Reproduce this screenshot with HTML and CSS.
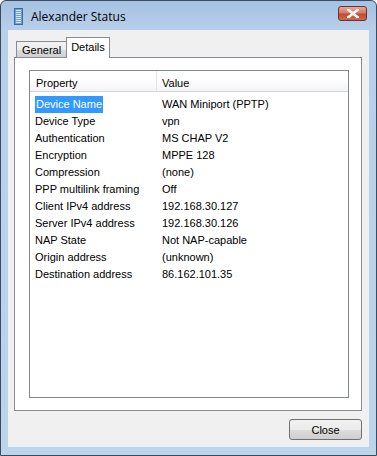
FILE: index.html
```html
<!DOCTYPE html>
<html lang="en">
<head>
  <meta charset="UTF-8">
  <title>Alexander Status</title>
  <link rel="stylesheet" href="styles.css">
</head>
<body>
  <div class="window">
    <div class="titlebar">
      <svg class="app-icon" width="9" height="17" viewBox="0 0 9 17">
        <rect x="0.5" y="0.5" width="8" height="16" fill="#6f9fd8" stroke="#3a6aa8"/>
        <rect x="2" y="2" width="5" height="1" fill="#dfeaf8"/>
        <rect x="2" y="4" width="5" height="1" fill="#dfeaf8"/>
        <rect x="2" y="6" width="5" height="1" fill="#dfeaf8"/>
        <rect x="2" y="8" width="5" height="1" fill="#dfeaf8"/>
        <rect x="2" y="10" width="5" height="1" fill="#dfeaf8"/>
        <rect x="2" y="12" width="5" height="1" fill="#dfeaf8"/>
        <rect x="2" y="14" width="5" height="1" fill="#dfeaf8"/>
      </svg>
      <span class="title">Alexander Status</span>
      <div class="close-x">
        <svg width="12" height="9" viewBox="0 0 12 9">
          <path d="M1 0.5 L11 8.5 M11 0.5 L1 8.5" stroke="#ffffff" stroke-width="2.6" stroke-linecap="square"/>
          <path d="M1 0.5 L11 8.5 M11 0.5 L1 8.5" stroke="#f4f4f4" stroke-width="1.6"/>
        </svg>
      </div>
    </div>
    <div class="client">
      <div class="tabs">
        <div class="tab">General</div>
        <div class="tab active">Details</div>
      </div>
      <div class="panel">
        <div class="listview">
          <div class="lv-header">
            <div class="col-prop">Property</div>
            <div class="col-val">Value</div>
          </div>
          <div class="lv-rows">
            <div class="row"><div class="cell-prop"><span class="selected">Device Name</span></div><div class="cell-val">WAN Miniport (PPTP)</div></div>
            <div class="row"><div class="cell-prop">Device Type</div><div class="cell-val">vpn</div></div>
            <div class="row"><div class="cell-prop">Authentication</div><div class="cell-val">MS CHAP V2</div></div>
            <div class="row"><div class="cell-prop">Encryption</div><div class="cell-val">MPPE 128</div></div>
            <div class="row"><div class="cell-prop">Compression</div><div class="cell-val">(none)</div></div>
            <div class="row"><div class="cell-prop">PPP multilink framing</div><div class="cell-val">Off</div></div>
            <div class="row"><div class="cell-prop">Client IPv4 address</div><div class="cell-val">192.168.30.127</div></div>
            <div class="row"><div class="cell-prop">Server IPv4 address</div><div class="cell-val">192.168.30.126</div></div>
            <div class="row"><div class="cell-prop">NAP State</div><div class="cell-val">Not NAP-capable</div></div>
            <div class="row"><div class="cell-prop">Origin address</div><div class="cell-val">(unknown)</div></div>
            <div class="row"><div class="cell-prop">Destination address</div><div class="cell-val">86.162.101.35</div></div>
          </div>
        </div>
      </div>
      <div class="buttons">
        <button class="btn">Close</button>
      </div>
    </div>
  </div>
</body>
</html>
```

FILE: styles.css
```css
body {
  margin: 0;
  padding: 0;
  background-color: #ffffff;
  font-family: "Liberation Sans", Arial, sans-serif;
  font-size: 11px;
  color: #000000;
}
.window {
  width: 377px;
  height: 456px;
  box-sizing: border-box;
  border: 1px solid #3c4b5e;
  border-radius: 6px 6px 0 0;
  background: linear-gradient(to bottom, #a6c2e2 0px, #b7cfea 30px, #bcd4ec 100%);
  padding: 0 7px 8px 7px;
  display: flex;
  flex-direction: column;
}
.titlebar {
  height: 29px;
  display: flex;
  align-items: center;
  position: relative;
}
.app-icon {
  margin-left: 6px;
  margin-top: 1px;
}
.title {
  margin-left: 8px;
  font-family: "Open Sans", "Noto Sans", sans-serif;
  font-size: 12px;
  color: #000000;
  margin-top: 1px;
}
.close-x {
  margin-left: auto;
  margin-right: 2px;
  margin-top: -4px;
  width: 29px;
  height: 15px;
  box-sizing: border-box;
  border: 1px solid #6e2f2a;
  border-radius: 3px;
  background: linear-gradient(to bottom, #e9a99c 0%, #d47a68 45%, #c14a33 55%, #cf6a50 100%);
  display: flex;
  align-items: center;
  justify-content: center;
}
.client {
  flex: 1;
  background-color: #f0f0f0;
  display: flex;
  flex-direction: column;
  padding: 7px 7px 7px 6px;
}
.tabs {
  display: flex;
  align-items: flex-end;
  height: 20px;
  padding-left: 2px;
}
.tab {
  box-sizing: border-box;
  border: 1px solid #898c95;
  border-bottom: none;
  padding: 2px 5px 0 5px;
  background: linear-gradient(to bottom, #f2f2f2 0%, #ebebeb 50%, #dddddd 51%, #cfcfcf 100%);
  height: 16px;
  line-height: 13px;
}
.tab.active {
  height: 21px;
  background: #ffffff;
  border-left: 1px solid #898c95;
  padding: 3px 4px 0 4px;
  margin-bottom: -1px;
  position: relative;
}
.tab:first-child {
  border-right: none;
}
.panel {
  flex: 1;
  background-color: #ffffff;
  border: 1px solid #898c95;
  padding: 12px 12px 12px 14px;
  display: flex;
}
.listview {
  flex: 1;
  border: 1px solid #828790;
  display: flex;
  flex-direction: column;
}
.lv-header {
  display: flex;
  height: 20px;
  border-bottom: 1px solid #d5d5d5;
  background: linear-gradient(to bottom, #ffffff 0%, #ffffff 40%, #f3f4f6 100%);
  line-height: 20px;
}
.col-prop {
  width: 120px;
  padding-left: 6px;
  padding-top: 2px;
  border-right: 1px solid #e3e5e8;
}
.col-val {
  padding-left: 5px;
  padding-top: 2px;
}
.lv-rows {
  padding-top: 4px;
}
.row {
  display: flex;
  height: 17px;
  line-height: 17px;
}
.cell-prop {
  width: 121px;
  padding-left: 5px;
}
.cell-val {
  padding-left: 6px;
}
.selected {
  display: inline-block;
  background-color: #3399ff;
  color: #ffffff;
  padding: 0 1px;
}
.buttons {
  display: flex;
  justify-content: flex-end;
  padding-top: 8px;
}
.btn {
  width: 73px;
  height: 21px;
  border: 1px solid #707070;
  border-radius: 3px;
  background: linear-gradient(to bottom, #f2f2f2 0%, #ebebeb 50%, #dddddd 51%, #cfcfcf 100%);
  font-family: "Liberation Sans", Arial, sans-serif;
  font-size: 11px;
  color: #000000;
  padding: 0;
}
```
